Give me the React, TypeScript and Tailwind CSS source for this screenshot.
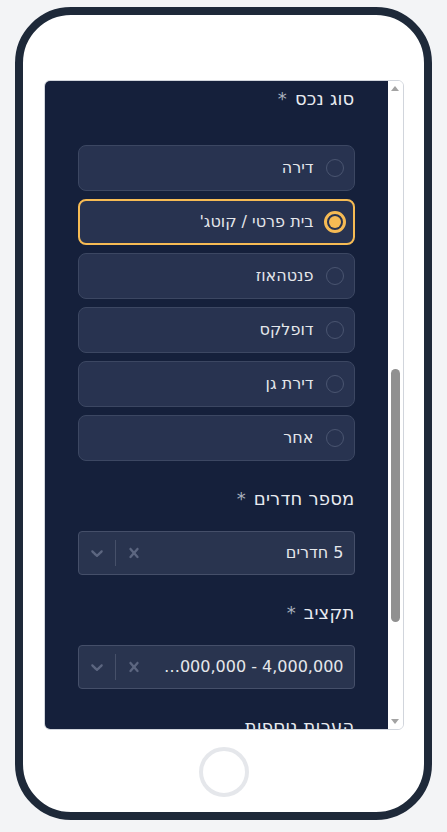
import React from 'react';

const propertyTypes = ['דירה', 'בית פרטי / קוטג\'', 'פנטהאוז', 'דופלקס', 'דירת גן', 'אחר'];

// scroll state of the form inside the phone screen
const view = { scrollTop: 699, scrollHeight: 1583, clientHeight: 648 };
const ARROW = 15;

const CrossIcon = () => (
  <svg viewBox="0 0 20 20" width="20" height="20" fill="currentColor" aria-hidden="true">
    <path d="M14.348 14.849c-0.469 0.469-1.229 0.469-1.697 0l-2.651-3.030-2.651 3.029c-0.469 0.469-1.229 0.469-1.697 0-0.469-0.469-0.469-1.229 0-1.697l2.758-3.15-2.759-3.152c-0.469-0.469-0.469-1.228 0-1.697s1.228-0.469 1.697 0l2.652 3.031 2.651-3.031c0.469-0.469 1.228-0.469 1.697 0s0.469 1.229 0 1.697l-2.758 3.152 2.758 3.15c0.469 0.469 0.469 1.229 0 1.698z" />
  </svg>
);

const ChevronIcon = () => (
  <svg viewBox="0 0 20 20" width="20" height="20" fill="currentColor" aria-hidden="true">
    <path d="M4.516 7.548c0.436-0.446 1.043-0.481 1.576 0l3.908 3.747 3.908-3.747c0.533-0.481 1.141-0.446 1.574 0 0.436 0.445 0.408 1.197 0 1.615-0.406 0.418-4.695 4.502-4.695 4.502-0.217 0.223-0.502 0.335-0.787 0.335s-0.57-0.112-0.789-0.335c0 0-4.287-4.084-4.695-4.502s-0.436-1.17 0-1.615z" />
  </svg>
);

const Label: React.FC<{ text: string; required?: boolean; className?: string }> = ({ text, required, className }) => (
  <label className={`block text-lg leading-7 tracking-[0.2px] text-[#e8ebf0] ${className ?? 'mb-[18px]'}`}>
    {text} {required && <span className="mr-0.5 text-[#a9b0bd]">*</span>}
  </label>
);

// react-select look-alike
const FakeSelect: React.FC<{ value: string }> = ({ value }) => (
  <div className="flex h-[44px] items-center rounded-[4px] border border-[#454f69] bg-[#29344f]">
    <div className="min-w-0 flex-1 px-[10px]">
      <div className="truncate text-base text-[#e5e7eb]">{value}</div>
    </div>
    <div className="flex shrink-0 items-center self-stretch">
      <div className="flex w-[36px] justify-center text-[#5c6680]">
        <CrossIcon />
      </div>
      <span className="my-[8px] w-px self-stretch bg-[#465069]" />
      <div className="flex w-[36px] justify-center text-[#5c6680]">
        <ChevronIcon />
      </div>
    </div>
  </div>
);

const Scrollbar: React.FC = () => {
  const track = view.clientHeight - ARROW * 2;
  const thumb = Math.round((track * view.clientHeight) / view.scrollHeight);
  const offset = Math.round(((track - thumb) * view.scrollTop) / (view.scrollHeight - view.clientHeight));
  return (
    <div className="flex w-[15px] shrink-0 flex-col bg-white">
      <div className="flex h-[15px] items-center justify-center">
        <svg width="8" height="5" viewBox="0 0 8 5" aria-hidden="true">
          <polygon points="4,0 8,5 0,5" fill="#a3a3a3" />
        </svg>
      </div>
      <div className="flex flex-1 flex-col items-center">
        <div className="w-[9px] rounded-full bg-[#909090]" style={{ marginTop: offset, height: thumb }} />
      </div>
      <div className="flex h-[15px] items-center justify-center">
        <svg width="8" height="5" viewBox="0 0 8 5" aria-hidden="true">
          <polygon points="0,0 8,0 4,5" fill="#a3a3a3" />
        </svg>
      </div>
    </div>
  );
};

const App: React.FC = () => {
  const selected = 1;

  return (
    <div className="min-h-screen bg-gray-100 pt-[7px] font-['DejaVu_Sans',sans-serif]">
      <div className="mx-auto flex h-[813px] w-[417px] flex-col items-center rounded-[56px] border-8 border-gray-800 bg-white">
        {/* Screen */}
        <div className="mt-[65px] flex h-[650px] w-[360px] overflow-hidden rounded-md border border-gray-300 bg-white">
          <div dir="rtl" className="min-w-0 flex-1 overflow-hidden bg-[#15203b] px-[33px] pt-[4px]">
            <div className="space-y-6">
              {/* Property type */}
              <div>
                <Label text="סוג נכס" required className="mb-8" />
                <div className="space-y-2">
                  {propertyTypes.map((t, i) => {
                    const isSel = i === selected;
                    return (
                      <div
                        key={t}
                        className={`flex h-[46px] items-center gap-3 rounded-lg bg-[#283350] ${
                          isSel ? 'border-2 border-[#f6bb54] pr-[9px]' : 'border border-[#3c4762] pr-[10px]'
                        }`}
                      >
                        <span className="flex h-[18px] w-[18px] shrink-0 items-center justify-center">
                          {isSel ? (
                            <span className="flex h-[22px] w-[22px] shrink-0 items-center justify-center rounded-full border-[3px] border-[#f6bb54]">
                              <span className="h-[12px] w-[12px] rounded-full bg-[#f6bb54]" />
                            </span>
                          ) : (
                            <span className="h-[18px] w-[18px] rounded-full border-[1.5px] border-[#4a5570]" />
                          )}
                        </span>
                        <span className="text-base text-[#e5e7eb]">{t}</span>
                      </div>
                    );
                  })}
                </div>
              </div>

              <div>
                <Label text="מספר חדרים" required />
                <FakeSelect value="5 חדרים" />
              </div>

              <div>
                <Label text="תקציב" required />
                <FakeSelect value="4,000,000 - 10,000,000" />
              </div>

              <div>
                <Label text="הערות נוספות" />
                <textarea className="block h-[100px] w-full resize-none rounded-[4px] border border-[#454f69] bg-[#29344f] p-3 text-base text-[#e5e7eb] outline-none" />
              </div>
            </div>
          </div>
          <Scrollbar />
        </div>

        {/* Home button */}
        <div className="mt-[17px] h-[50px] w-[50px] rounded-full border-4 border-gray-200" />
      </div>
    </div>
  );
};

export default App;
